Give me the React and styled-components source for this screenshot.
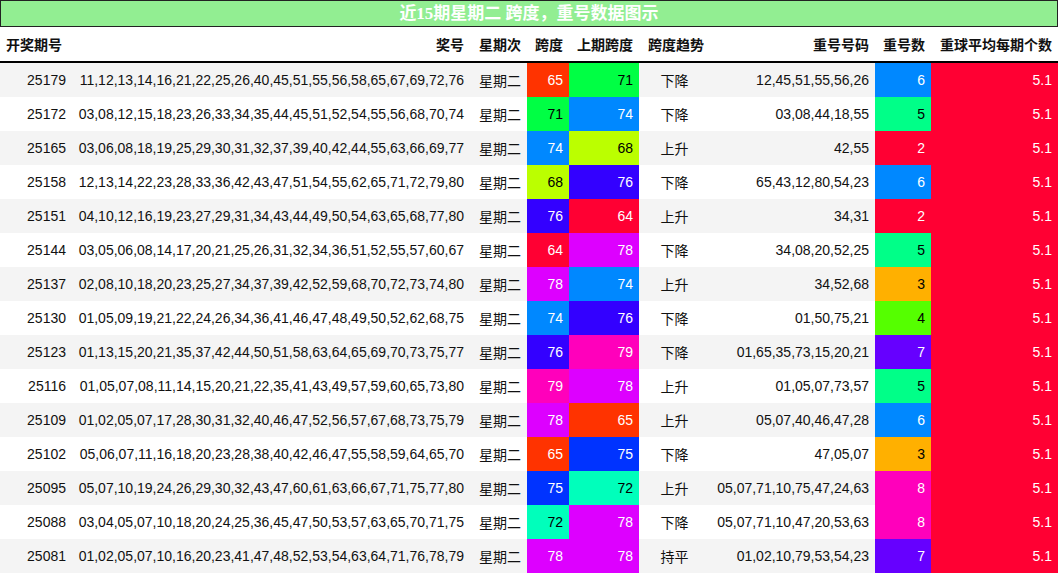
import React from "react";
import styled, { createGlobalStyle } from "styled-components";

const G = createGlobalStyle`
  body { margin: 0; background: #fff; font-family: "Liberation Sans", "Noto Sans CJK SC", sans-serif; }
`;

const Wrap = styled.div`width: 1058px;`;
const Title = styled.div`
  height: 25px; line-height: 25px; background: #92ee92; border: 1px solid #222;
  color: #fff; text-align: center; font-weight: bold; font-size: 17px;
  font-family: "Liberation Serif", "Noto Sans CJK SC", serif;
`;
const Table = styled.table`
  width: 1058px; border-collapse: collapse; table-layout: fixed; font-size: 14px; color: #111;
`;
const Th = styled.th`
  height: 34px; padding: 0 6px; text-align: ${p => p.$left ? "left" : p.$center ? "center" : "right"};
  font-weight: bold; font-size: 14px; border-bottom: 2px solid #000; white-space: nowrap;
`;
const Tr = styled.tr`background: ${p => p.$odd ? "#f4f4f4" : "#fff"};`;
const Td = styled.td`
  height: 34px; padding: 0 6px; white-space: nowrap; text-align: ${p => p.$center ? "center" : "right"};
  background: ${p => p.$bg || "transparent"}; color: ${p => p.$fg || "#111"};
`;

const C = {
  red: ["#ff3300", "#fff"], grn: ["#00ff44", "#000"], blu: ["#0088ff", "#fff"], lime: ["#bbff00", "#000"],
  ind: ["#3300ff", "#fff"], crim: ["#ff0033", "#fff"], mag: ["#dd00ff", "#fff"], pink: ["#ff00bb", "#fff"],
  blu2: ["#0033ff", "#fff"], teal: ["#00ffbb", "#000"], mint: ["#00ff88", "#000"], org: ["#ffb000", "#000"],
  lg: ["#55ff00", "#000"], vio: ["#6600ff", "#fff"],
};
const spanCol = { 65: "red", 71: "grn", 74: "blu", 68: "lime", 76: "ind", 64: "crim", 78: "mag", 79: "pink", 75: "blu2", 72: "teal" };
const cntCol = { 6: "blu", 5: "mint", 2: "crim", 3: "org", 4: "lg", 7: "vio", 8: "pink" };

const rows = [
  ["25179", "11,12,13,14,16,21,22,25,26,40,45,51,55,56,58,65,67,69,72,76", 65, 71, "下降", "12,45,51,55,56,26", 6],
  ["25172", "03,08,12,15,18,23,26,33,34,35,44,45,51,52,54,55,56,68,70,74", 71, 74, "下降", "03,08,44,18,55", 5],
  ["25165", "03,06,08,18,19,25,29,30,31,32,37,39,40,42,44,55,63,66,69,77", 74, 68, "上升", "42,55", 2],
  ["25158", "12,13,14,22,23,28,33,36,42,43,47,51,54,55,62,65,71,72,79,80", 68, 76, "下降", "65,43,12,80,54,23", 6],
  ["25151", "04,10,12,16,19,23,27,29,31,34,43,44,49,50,54,63,65,68,77,80", 76, 64, "上升", "34,31", 2],
  ["25144", "03,05,06,08,14,17,20,21,25,26,31,32,34,36,51,52,55,57,60,67", 64, 78, "下降", "34,08,20,52,25", 5],
  ["25137", "02,08,10,18,20,23,25,27,34,37,39,42,52,59,68,70,72,73,74,80", 78, 74, "上升", "34,52,68", 3],
  ["25130", "01,05,09,19,21,22,24,26,34,36,41,46,47,48,49,50,52,62,68,75", 74, 76, "下降", "01,50,75,21", 4],
  ["25123", "01,13,15,20,21,35,37,42,44,50,51,58,63,64,65,69,70,73,75,77", 76, 79, "下降", "01,65,35,73,15,20,21", 7],
  ["25116", "01,05,07,08,11,14,15,20,21,22,35,41,43,49,57,59,60,65,73,80", 79, 78, "上升", "01,05,07,73,57", 5],
  ["25109", "01,02,05,07,17,28,30,31,32,40,46,47,52,56,57,67,68,73,75,79", 78, 65, "上升", "05,07,40,46,47,28", 6],
  ["25102", "05,06,07,11,16,18,20,23,28,38,40,42,46,47,55,58,59,64,65,70", 65, 75, "下降", "47,05,07", 3],
  ["25095", "05,07,10,19,24,26,29,30,32,43,47,60,61,63,66,67,71,75,77,80", 75, 72, "上升", "05,07,71,10,75,47,24,63", 8],
  ["25088", "03,04,05,07,10,18,20,24,25,36,45,47,50,53,57,63,65,70,71,75", 72, 78, "下降", "05,07,71,10,47,20,53,63", 8],
  ["25081", "01,02,05,07,10,16,20,23,41,47,48,52,53,54,63,64,71,76,78,79", 78, 78, "持平", "01,02,10,79,53,54,23", 7],
];

export default function App() {
  return (
    <Wrap>
      <G />
      <Title>近15期星期二 跨度，重号数据图示</Title>
      <Table>
        <colgroup>
          <col style={{ width: 72 }} /><col style={{ width: 398 }} /><col style={{ width: 57 }} />
          <col style={{ width: 42 }} /><col style={{ width: 70 }} /><col style={{ width: 71 }} />
          <col style={{ width: 165 }} /><col style={{ width: 56 }} /><col style={{ width: 127 }} />
        </colgroup>
        <thead>
          <tr>
            <Th $left>开奖期号</Th><Th>奖号</Th><Th>星期次</Th><Th>跨度</Th><Th>上期跨度</Th>
            <Th>跨度趋势</Th><Th>重号号码</Th><Th>重号数</Th><Th>重球平均每期个数</Th>
          </tr>
        </thead>
        <tbody>
          {rows.map((r, i) => {
            const a = C[spanCol[r[2]]], b = C[spanCol[r[3]]], c = C[cntCol[r[6]]];
            return (
              <Tr key={r[0]} $odd={i % 2 === 0}>
                <Td>{r[0]}</Td><Td>{r[1]}</Td><Td>星期二</Td>
                <Td $bg={a[0]} $fg={a[1]}>{r[2]}</Td>
                <Td $bg={b[0]} $fg={b[1]}>{r[3]}</Td>
                <Td $center>{r[4]}</Td>
                <Td>{r[5]}</Td>
                <Td $bg={c[0]} $fg={c[1]}>{r[6]}</Td>
                <Td $bg="#ff0033" $fg="#fff">5.1</Td>
              </Tr>
            );
          })}
        </tbody>
      </Table>
    </Wrap>
  );
}
